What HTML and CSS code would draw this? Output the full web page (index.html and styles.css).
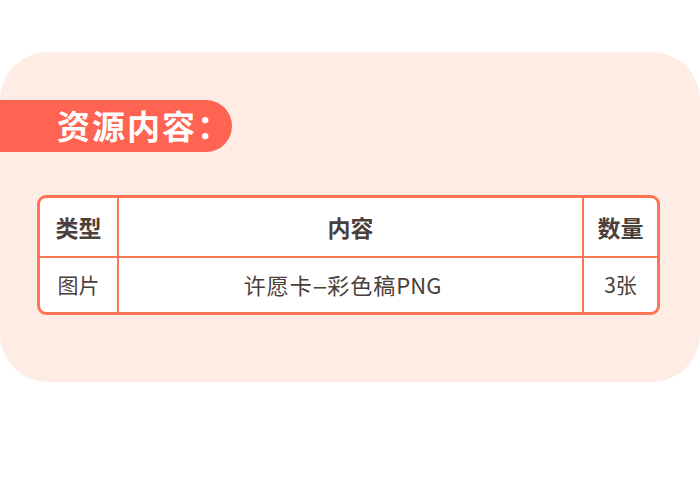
FILE: index.html
```html
<!DOCTYPE html>
<html lang="zh">
<head>
<meta charset="utf-8">
<link rel="stylesheet" href="styles.css">
</head>
<body>
<div class="page">
  <section class="card">
    <div class="banner"><span class="banner-text">资源内容：</span></div>
    <div class="table">
      <div class="cell head c1">类型</div>
      <div class="cell head c2">内容</div>
      <div class="cell head c3">数量</div>
      <div class="cell c1 bottom">图片</div>
      <div class="cell c2 bottom wide"><span class="cjk">许愿卡</span><span class="dash">-</span><span class="cjk">彩色稿</span>PNG</div>
      <div class="cell c3 bottom">3张</div>
    </div>
  </section>
</div>
</body>
</html>
```
FILE: styles.css
```css
html, body {
  margin: 0;
  padding: 0;
  background: #ffffff;
}
.page {
  width: 700px;
  height: 495px;
  padding-top: 52px;
  box-sizing: border-box;
  font-family: "Noto Sans CJK SC", "Noto Sans", sans-serif;
}
.card {
  width: 700px;
  height: 330px;
  background: #FFECE5;
  border-radius: 48px;
  padding-top: 48px;
  box-sizing: border-box;
}
.banner {
  width: 232px;
  height: 52px;
  background: #FF6352;
  border-radius: 0 26px 26px 0;
  display: flex;
  align-items: center;
  padding-left: 57px;
  box-sizing: border-box;
}
.banner-text {
  color: #ffffff;
  font-size: 33px;
  font-weight: 700;
  letter-spacing: 2px;
  line-height: 1;
  margin-top: -2px;
  white-space: nowrap;
}
.table {
  margin: 43px 0 0 37px;
  width: 623px;
  height: 120px;
  box-sizing: border-box;
  border: 3px solid #FF7554;
  border-radius: 9px;
  background: #ffffff;
  display: grid;
  grid-template-columns: 79px 465px 1fr;
  grid-template-rows: 60px 1fr;
  overflow: hidden;
}
.cell {
  display: flex;
  align-items: center;
  justify-content: center;
  color: #4B3F3B;
  font-size: 21px;
  line-height: 1;
}
.head {
  font-weight: 700;
  font-size: 23px;
  border-bottom: 2px solid #FF7554;
}
.c1, .c2 {
  border-right: 2px solid #FF7554;
}
.wide {
  font-size: 22px;
  padding-right: 16px;
}
.cjk {
  letter-spacing: 1px;
}
.dash {
  display: inline-block;
  transform: scaleX(2.2);
  margin: 0 4px 0 3px;
}
.bottom {
  padding-bottom: 2px;
}
```
